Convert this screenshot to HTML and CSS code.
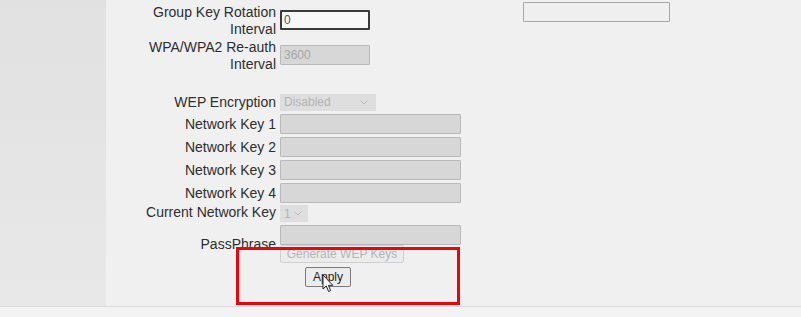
FILE: index.html
```html
<!DOCTYPE html>
<html>
<head>
<meta charset="utf-8">
<link rel="stylesheet" href="styles.css">
</head>
<body>
<div class="page">
  <aside class="sidebar"></aside>
  <main class="main">
    <form class="form">
      <div class="row r-gk">
        <label class="lbl">Group Key Rotation<br>Interval</label>
        <div class="field f-top"><input class="txt active" value="0"></div>
        <div class="aside-field"><input class="txt plain"></div>
      </div>
      <div class="row r-ra">
        <label class="lbl">WPA/WPA2 Re-auth<br>Interval</label>
        <div class="field f-top"><input class="txt dis short" value="3600" disabled></div>
      </div>
      <div class="row r-wep">
        <label class="lbl">WEP Encryption</label>
        <div class="field"><span class="sel sel-wep">Disabled<svg class="chev" viewBox="0 0 8 5"><path d="M0.5 0.5 L4 4 L7.5 0.5" fill="none" stroke="#b8b8b8" stroke-width="1"/></svg></span></div>
      </div>
      <div class="row r-nk">
        <label class="lbl">Network Key 1</label>
        <div class="field"><input class="txt dis long" disabled></div>
      </div>
      <div class="row r-nk">
        <label class="lbl">Network Key 2</label>
        <div class="field"><input class="txt dis long" disabled></div>
      </div>
      <div class="row r-nk">
        <label class="lbl">Network Key 3</label>
        <div class="field"><input class="txt dis long" disabled></div>
      </div>
      <div class="row r-nk">
        <label class="lbl">Network Key 4</label>
        <div class="field"><input class="txt dis long" disabled></div>
      </div>
      <div class="row r-cur">
        <label class="lbl">Current Network Key</label>
        <div class="field"><span class="sel sel-cur">1<svg class="chev" viewBox="0 0 8 5"><path d="M0.5 0.5 L4 4 L7.5 0.5" fill="none" stroke="#b8b8b8" stroke-width="1"/></svg></span></div>
      </div>
      <div class="row r-pp">
        <label class="lbl lbl-pp">PassPhrase</label>
        <div class="field f-stack">
          <input class="txt dis long" disabled>
          <button type="button" class="btn btn-gen" disabled>Generate WEP Keys</button>
        </div>
      </div>
      <div class="row r-apply">
        <button type="button" class="btn btn-apply">Apply</button>
      </div>
    </form>
    <div class="highlight"></div>
    <svg class="cursor" viewBox="0 0 12 19" width="12" height="19"><path d="M1 1 L1 15 L4.3 12 L6.6 17.5 L8.6 16.6 L6.4 11.3 L10.8 11.3 Z" fill="#fff" stroke="#222" stroke-width="1" stroke-linejoin="round"/></svg>
  </main>
</div>
<div class="footer"></div>
</body>
</html>
```

FILE: styles.css
```css
* { box-sizing: border-box; }
html, body { margin: 0; padding: 0; }
body {
  background: #f0f0f0;
  font-family: "Liberation Sans", Arial, sans-serif;
  color: #2e2e2e;
  width: 801px;
  height: 317px;
  overflow: hidden;
}
.page {
  display: flex;
  height: 306px;
}
.sidebar {
  width: 106px;
  flex: none;
  background: linear-gradient(#e1e1e1, #e8e8e8);
}
.main {
  flex: 1;
  position: relative;
  background: #f0f0f0;
}
.footer {
  height: 11px;
  border-top: 1px solid #dadada;
  background: #f3f3f3;
}
.form { margin: 0; padding: 0; }
.row {
  display: flex;
  align-items: flex-start;
}
.lbl {
  width: 174px;
  flex: none;
  padding-right: 4px;
  text-align: right;
  font-size: 14px;
  line-height: 17px;
  color: #2e2e2e;
}
.field {
  width: 243px;
  flex: none;
  display: flex;
}
.r-gk { margin-top: 4px; }
.r-ra { margin-top: 1px; }
.f-top { padding-top: 6px; }
.aside-field { margin-top: -2px; }

.txt {
  height: 20px;
  margin: 0;
  padding: 0 3px;
  font-family: "Liberation Sans", Arial, sans-serif;
  font-size: 12px;
  border-radius: 1px;
  outline: none;
}
.active {
  width: 90px;
  background: #f7f7f7;
  border: 2px solid #3a3a3a;
  color: #555;
  padding-left: 2px;
}
.plain {
  width: 147px;
  background: #efefef;
  border: 1px solid #a8a8a8;
}
.dis {
  background: #d7d7d7;
  border: 1px solid #b9b9b9;
  color: #a6a6a6;
}
.short { width: 90px; }
.long { width: 181px; }

.r-wep { margin-top: 18px; height: 22px; align-items: center; }
.sel {
  display: flex;
  align-items: center;
  height: 17px;
  background: #dedede;
  color: #b3b3b3;
  font-size: 12px;
  padding-left: 4px;
  position: relative;
}
.sel-wep { width: 96px; }
.sel-cur { width: 28px; }
.chev {
  position: absolute;
  width: 8px;
  height: 5px;
  top: 6px;
  right: 8px;
}
.sel-cur .chev { right: 6px; }

.r-nk { height: 23px; }
.r-nk .lbl { margin-top: 3px; }
.r-nk .field { padding-top: 1px; }

.r-cur { height: 18px; }
.r-cur .lbl { margin-top: -1px; }

.r-pp { align-items: center; }
.lbl-pp { padding-top: 3px; }
.f-stack {
  flex-direction: column;
  align-items: flex-start;
  padding-top: 2px;
}
.btn {
  font-family: "Liberation Sans", Arial, sans-serif;
  font-size: 12px;
  margin: 0;
  border-radius: 2px;
  line-height: 14px;
}
.btn-gen {
  width: 124px;
  height: 18px;
  padding: 0;
  background: #ececec;
  border: 1px solid #d0d0d0;
  color: #b5b5b5;
}
.r-apply { padding-left: 199px; padding-top: 4px; }
.btn-apply {
  width: 46px;
  height: 20px;
  padding: 0;
  background: #ececec;
  border: 1px solid #7a7a7a;
  color: #222;
}
.highlight {
  position: absolute;
  left: 130px;
  top: 247px;
  width: 224px;
  height: 58px;
  border: 3px solid #e8060c;
}
.cursor {
  position: absolute;
  left: 216px;
  top: 274px;
}
```
